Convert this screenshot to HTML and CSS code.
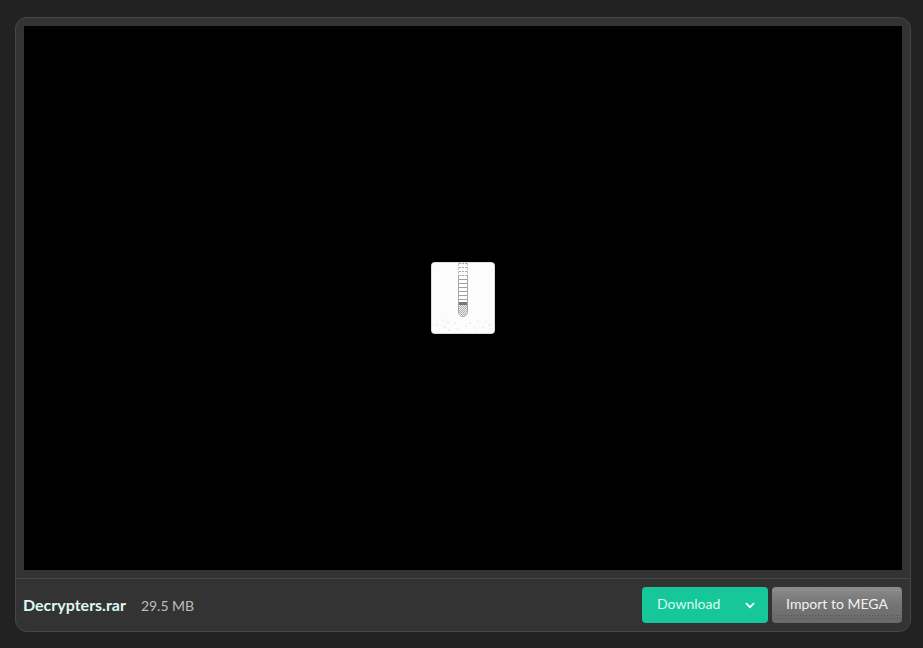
FILE: index.html
```html
<!DOCTYPE html>
<html lang="en">
<head>
    <meta charset="UTF-8">
    <meta name="viewport" content="width=device-width, initial-scale=1.0">
    <title>Decrypters.rar</title>
    <link rel="stylesheet" href="styles.css">
</head>
<body>
    <div class="file-card">
        <div class="preview">
            <svg class="file-icon" width="64" height="72" viewBox="0 0 64 72">
                <defs>
                    <pattern id="checker" width="2" height="2" patternUnits="userSpaceOnUse">
                        <rect width="2" height="2" fill="#f2f2f2"/>
                        <rect width="1" height="1" fill="#aaa"/>
                        <rect x="1" y="1" width="1" height="1" fill="#aaa"/>
                    </pattern>
                </defs>
                <rect x="0.5" y="0.5" width="63" height="71" rx="3" fill="#fcfcfc" stroke="#dcdcdc"/>
                <path d="M27.500 13v37a4.500 4.500 0 0 0 9 0V13" fill="#fff" stroke="#a8a8a8"/>
                <path d="M27.500 1v12M36.500 1v12" stroke="#c4c4c4" stroke-dasharray="3 1" fill="none"/>
                <path d="M28 1.500h8M28 5.500h8M28 9.500h8M28 13.500h8" stroke="#aaa" stroke-dasharray="2 1" fill="none"/>
                <path d="M28 17.500h8M28 21.500h8M28 25.500h8M28 29.500h8M28 33.500h8M28 37.500h8" stroke="#a0a0a0" fill="none"/>
                <rect x="28" y="40" width="8" height="3" fill="#777"/>
                <path d="M28 43h8v7a4 4 0 0 1-8 0z" fill="url(#checker)"/>
                <g fill="#bbb">
                    <circle cx="12" cy="58" r=".5"/><circle cx="17" cy="60" r=".5"/><circle cx="24" cy="61" r=".5"/>
                    <circle cx="39" cy="61" r=".5"/><circle cx="47" cy="59" r=".5"/><circle cx="55" cy="60" r=".5"/>
                    <circle cx="6" cy="63" r=".5"/><circle cx="14" cy="65" r=".5"/><circle cx="35" cy="64" r=".5"/>
                    <circle cx="44" cy="66" r=".5"/><circle cx="52" cy="65" r=".5"/><circle cx="58" cy="63" r=".5"/>
                    <circle cx="18" cy="68" r=".5"/><circle cx="27" cy="67" r=".5"/>
                </g>
            </svg>
        </div>
        <div class="info-bar">
            <div class="file-info">
                <span class="file-name">Decrypters.rar</span>
                <span class="file-size">29.5 MB</span>
            </div>
            <div class="actions">
                <div class="btn-download">
                    <span>Download</span>
                    <svg class="chevron" width="10" height="7" viewBox="0 0 10 7">
                        <path d="M1 1.200l4 4 4-4" fill="none" stroke="#fff" stroke-width="1.800"/>
                    </svg>
                </div>
                <div class="btn-import">Import to MEGA</div>
            </div>
        </div>
    </div>
</body>
</html>
```

FILE: styles.css
```css
html, body {
    height: 100%;
}

body {
    margin: 0;
    padding: 17px 12px 16px 15px;
    box-sizing: border-box;
    background-color: #222;
    font-family: Lato, sans-serif;
    color: #fff;
}

.file-card {
    height: 100%;
    box-sizing: border-box;
    display: flex;
    flex-direction: column;
    background-color: #333;
    border: 1px solid #474747;
    border-radius: 12px;
    padding: 8px 8px 0 8px;
}

.preview {
    flex: 1;
    background-color: #000;
    display: flex;
    justify-content: center;
    align-items: center;
}

.file-icon {
    display: block;
}

.info-bar {
    height: 52px;
    flex: none;
    margin: 8px -8px 0 -8px;
    padding: 0 8px;
    border-top: 1px solid #474747;
    display: flex;
    justify-content: space-between;
    align-items: center;
}

.file-info {
    display: flex;
    align-items: center;
    gap: 15px;
    margin-left: -1px;
}

.file-name {
    font-size: 16px;
    font-weight: 700;
    color: #dff8f1;
    padding-bottom: 2px;
}

.file-size {
    font-size: 14px;
    color: #bdbdbd;
}

.actions {
    display: flex;
    gap: 4px;
}

.btn-download {
    width: 126px;
    height: 36px;
    box-sizing: border-box;
    padding: 0 13px 3px 15px;
    background-color: #16c79a;
    border-radius: 4px;
    display: flex;
    justify-content: space-between;
    align-items: center;
    font-size: 14px;
    color: #dff8f1;
}

.chevron {
    margin-top: 3px;
}

.btn-import {
    width: 130px;
    height: 36px;
    box-sizing: border-box;
    padding-bottom: 3px;
    border-radius: 4px;
    display: flex;
    justify-content: center;
    align-items: center;
    font-size: 14px;
    color: #f2f2f2;
    background-color: #7b7b7b;
    background-image:
        radial-gradient(circle, #a0a0a0 0.6px, transparent 0.8px),
        radial-gradient(circle, #555 0.6px, transparent 0.8px),
        radial-gradient(circle, #555 0.6px, transparent 0.8px),
        linear-gradient(#8c8c8c, #747474 50%, #6a6a6a);
    background-size: 3px 3px, 3px 3px, 3px 3px, 100% 100%;
    background-repeat: repeat-x, repeat-x, repeat-x, no-repeat;
    background-position: 0 2px, 0 27px, 1px 30px, 0 0;
}
```
